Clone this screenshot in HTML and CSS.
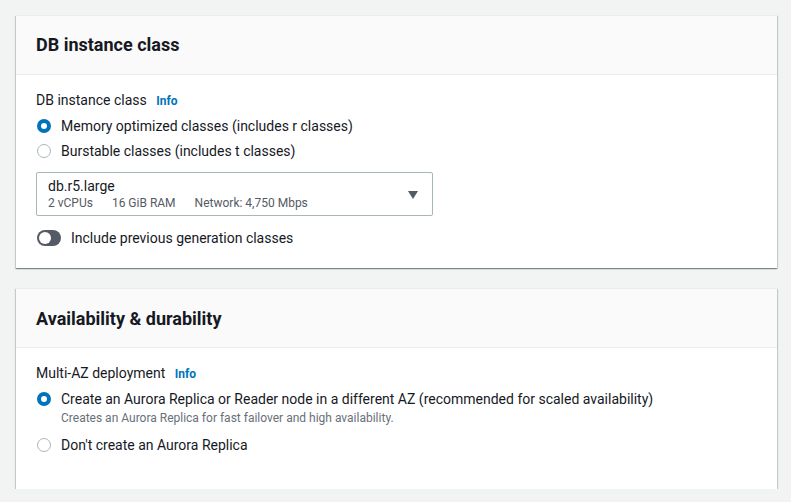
FILE: index.html
```html
<!DOCTYPE html>
<html>
<head>
<meta charset="utf-8">
<link rel="stylesheet" href="styles.css">
</head>
<body>
<div class="page">
  <section class="card">
    <div class="card-header"><h2>DB instance class</h2></div>
    <div class="card-body">
      <div class="label">DB instance class <span class="info">Info</span></div>
      <div class="radios">
        <div class="radio-row"><span class="radio checked"></span><span>Memory optimized classes (includes r classes)</span></div>
        <div class="radio-row"><span class="radio"></span><span>Burstable classes (includes t classes)</span></div>
      </div>
      <div class="select">
        <div class="select-text">
          <div class="select-main">db.r5.large</div>
          <div class="select-tags"><span>2 vCPUs</span><span>16 GiB RAM</span><span>Network: 4,750 Mbps</span></div>
        </div>
        <svg class="caret" width="10" height="8" viewBox="0 0 10 8"><path d="M0 0 H10 L5 8 Z" fill="#545b64"/></svg>
      </div>
      <div class="toggle-row"><span class="toggle"><span class="knob"></span></span><span>Include previous generation classes</span></div>
    </div>
  </section>
  <section class="card">
    <div class="card-header header2"><h2>Availability &amp; durability</h2></div>
    <div class="card-body body2">
      <div class="label">Multi-AZ deployment <span class="info">Info</span></div>
      <div class="radios">
        <div class="radio-row top"><span class="radio checked"></span><div><div>Create an Aurora Replica or Reader node in a different AZ (recommended for scaled availability)</div><div class="desc">Creates an Aurora Replica for fast failover and high availability.</div></div></div>
        <div class="radio-row"><span class="radio"></span><span>Don't create an Aurora Replica</span></div>
      </div>
    </div>
  </section>
</div>
</body>
</html>
```
FILE: styles.css
```css
html, body {
  margin: 0;
  padding: 0;
  background: #f2f3f3;
  font-family: Roboto, "Liberation Sans", sans-serif;
  color: #16191f;
  font-size: 14px;
}
.page {
  padding: 15px 14px 0 16px;
  display: flex;
  flex-direction: column;
  gap: 20px;
}
.card {
  width: 761px;
  background: #fff;
  box-shadow: 0 1px 1px 0 rgba(0,28,36,.3), 1px 1px 1px 0 rgba(0,28,36,.15), -1px 1px 1px 0 rgba(0,28,36,.15);
  border-top: 1px solid #eaeded;
}
.card-header {
  background: #fafafa;
  border-bottom: 1px solid #eaeded;
  height: 58px;
  display: flex;
  align-items: center;
  padding: 0 20px;
}
.header2 { padding-top: 2px; height: 56px; }
.card-header h2 {
  margin: 0;
  font-size: 18px;
  font-weight: 700;
  line-height: 22px;
}
.card-body {
  padding: 14px 20px 19px 20px;
  display: flex;
  flex-direction: column;
}
.body2 { padding-bottom: 33px; }
.label {
  line-height: 22px;
}
.info {
  color: #0073bb;
  font-weight: 700;
  font-size: 12px;
  margin-left: 6px;
}
.radios {
  margin-top: 3px;
  display: flex;
  flex-direction: column;
  gap: 3px;
}
.radio-row {
  display: flex;
  align-items: center;
  gap: 10px;
  line-height: 22px;
}
.radio-row.top { align-items: flex-start; margin-bottom: 5px; }
.radio-row.top .radio { margin-top: 4px; }
.radio {
  box-sizing: border-box;
  width: 14px;
  height: 14px;
  border-radius: 50%;
  border: 1px solid #aab7b8;
  margin-left: 1px;
  flex: none;
  background: #fff;
}
.radio.checked {
  border: 4px solid #0073bb;
}
.desc {
  font-size: 12px;
  line-height: 16px;
  color: #687078;
}
.select {
  margin-top: 10px;
  width: 397px;
  height: 44px;
  box-sizing: border-box;
  border: 1px solid #aab7b8;
  border-radius: 2px;
  display: flex;
  align-items: center;
  justify-content: space-between;
  padding: 0 14px 0 11px;
}
.select-main { line-height: 18px; }
.select-tags {
  font-size: 12px;
  line-height: 16px;
  color: #545b64;
  display: flex;
  gap: 19px;
}
.caret { margin-top: 2px; }
.toggle-row {
  margin-top: 11px;
  display: flex;
  align-items: center;
  gap: 10px;
  line-height: 22px;
}
.toggle {
  width: 24px;
  height: 16px;
  border-radius: 8px;
  background: #545b64;
  margin-left: 1px;
  display: flex;
  align-items: center;
  padding: 0 2px;
  box-sizing: border-box;
}
.knob {
  width: 12px;
  height: 12px;
  border-radius: 50%;
  background: #fff;
}
```
